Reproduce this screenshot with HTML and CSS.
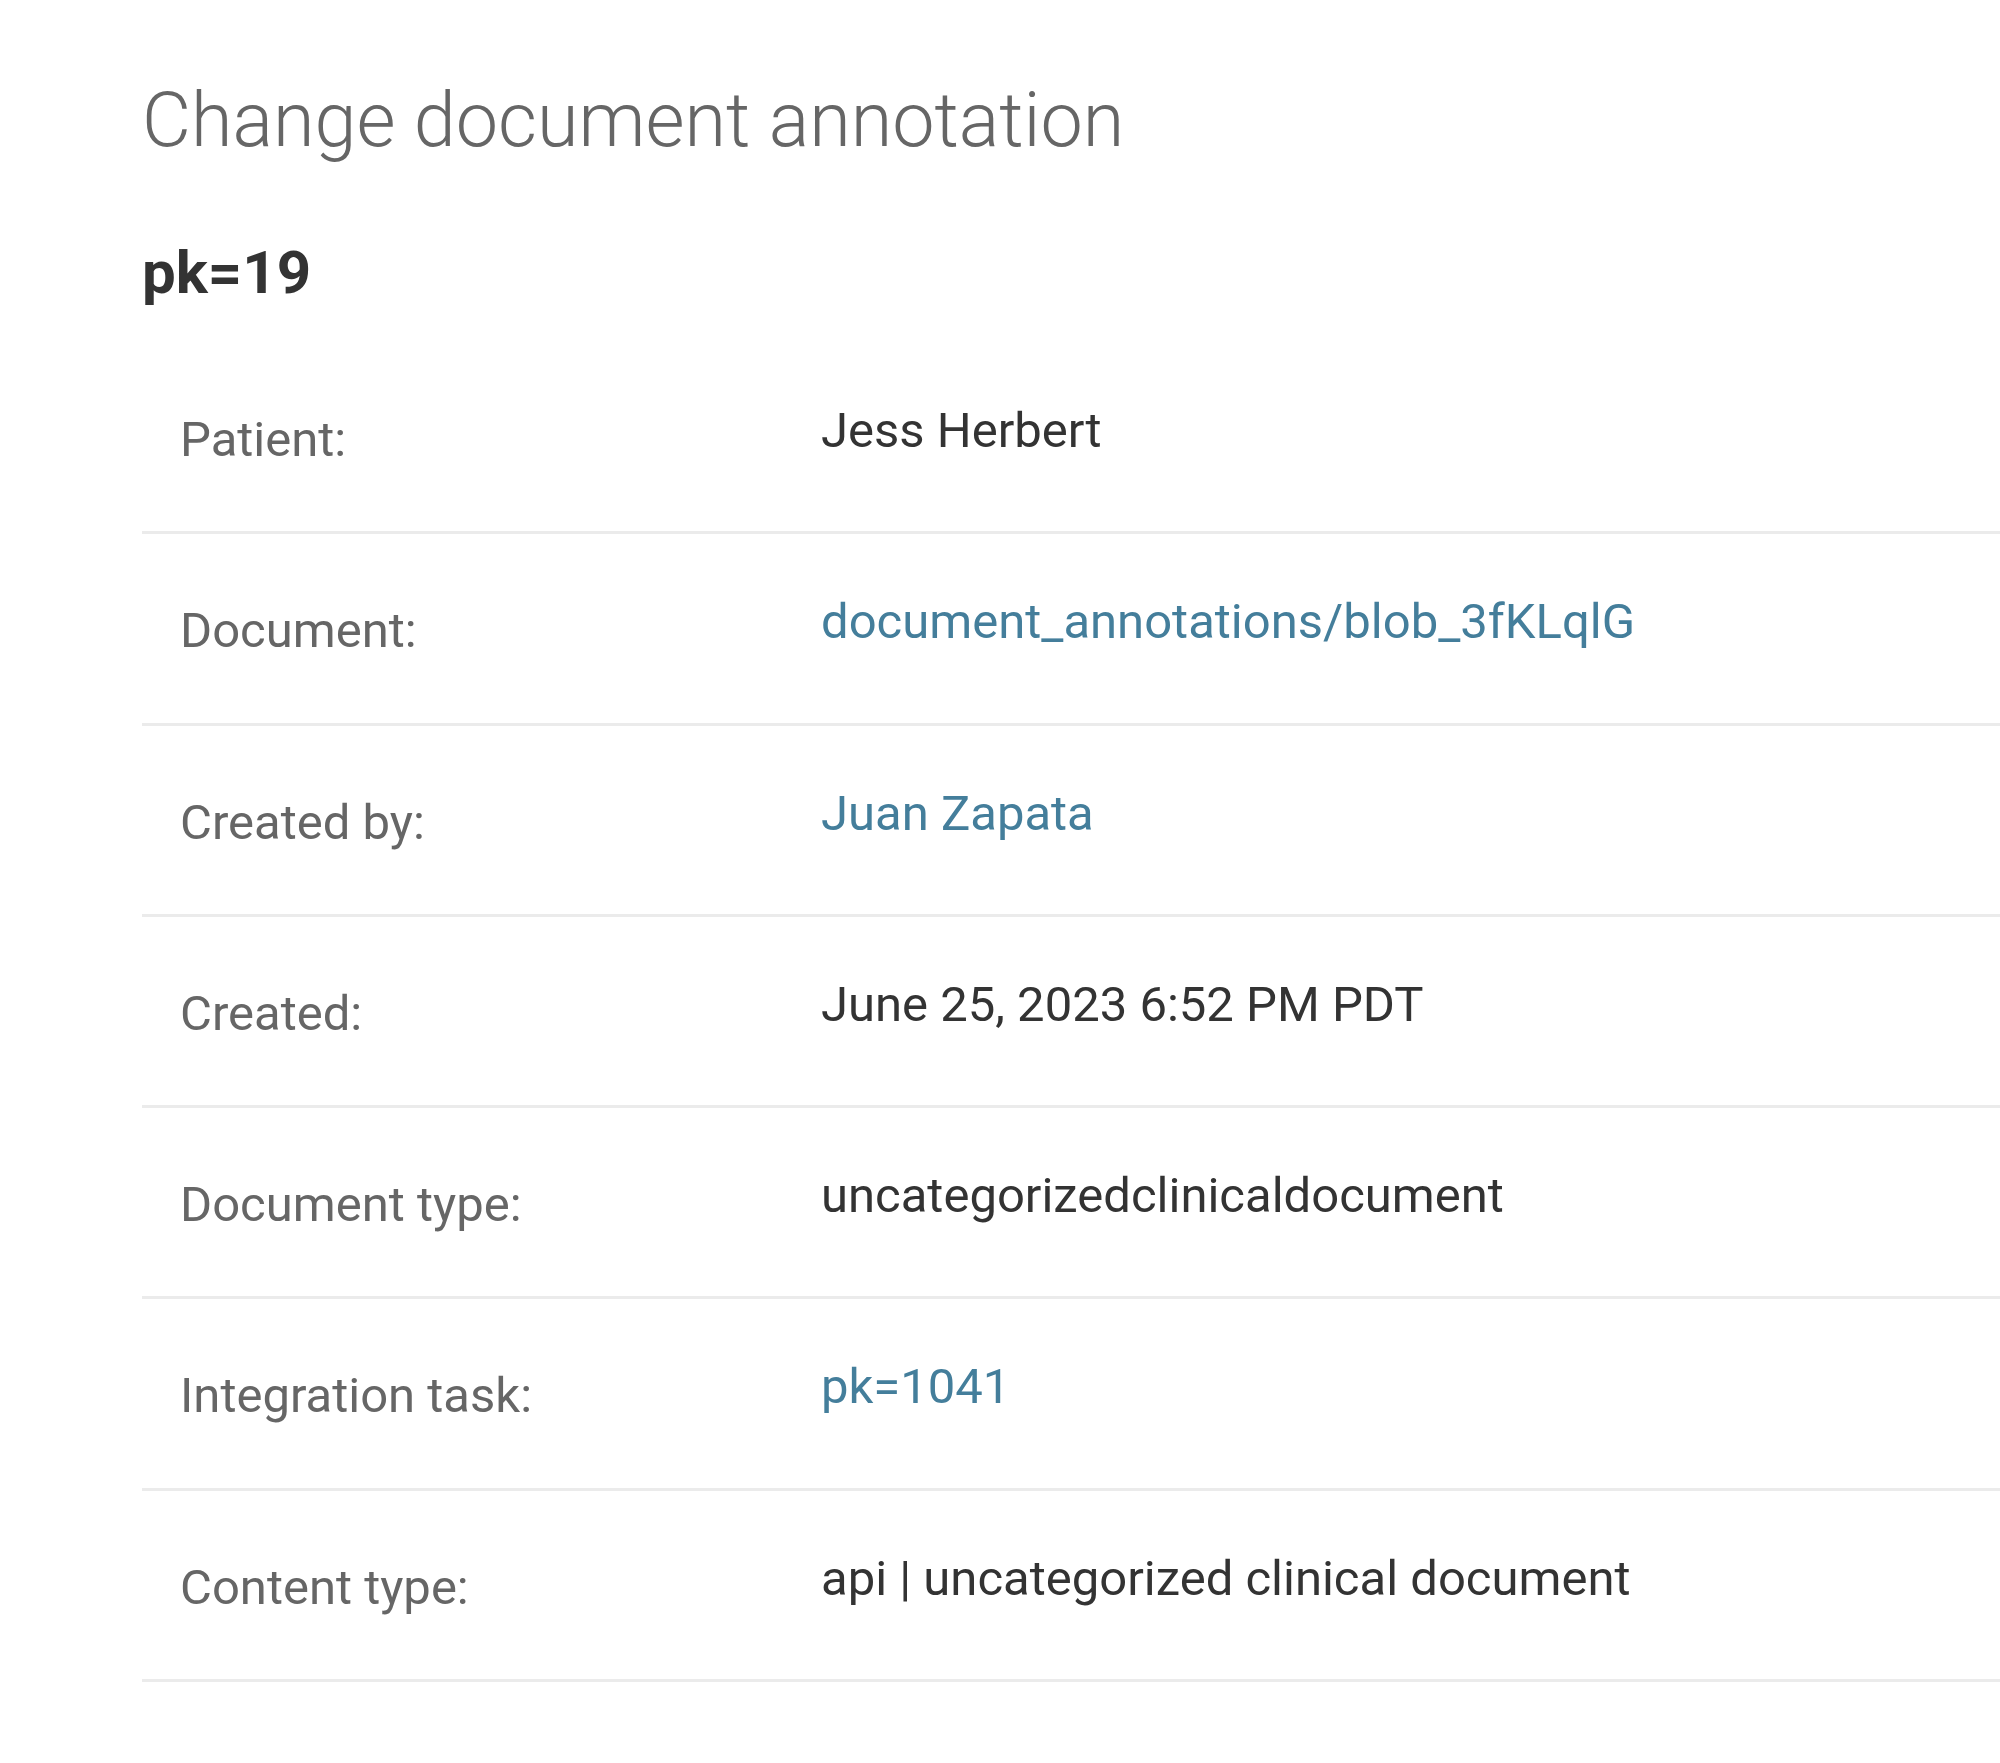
FILE: index.html
```html
<!DOCTYPE html>
<html lang="en">
<head>
<meta charset="utf-8">
<title>Change document annotation</title>
<link rel="stylesheet" href="styles.css">
</head>
<body>
<div class="content">
  <h1 class="title">Change document annotation</h1>
  <h2 class="subtitle">pk=19</h2>
  <fieldset class="module">
    <div class="row">
      <div class="label">Patient:</div>
      <div class="value">Jess Herbert</div>
    </div>
    <div class="row">
      <div class="label">Document:</div>
      <div class="value"><a href="#">document_annotations/blob_3fKLqlG</a></div>
    </div>
    <div class="row">
      <div class="label">Created by:</div>
      <div class="value"><a href="#">Juan Zapata</a></div>
    </div>
    <div class="row">
      <div class="label">Created:</div>
      <div class="value">June 25, 2023 6:52 PM PDT</div>
    </div>
    <div class="row">
      <div class="label">Document type:</div>
      <div class="value">uncategorizedclinicaldocument</div>
    </div>
    <div class="row">
      <div class="label">Integration task:</div>
      <div class="value"><a href="#">pk=1041</a></div>
    </div>
    <div class="row">
      <div class="label">Content type:</div>
      <div class="value">api | uncategorized clinical document</div>
    </div>
  </fieldset>
</div>
</body>
</html>
```
FILE: styles.css
```css
html, body {
  margin: 0;
  padding: 0;
  background: #ffffff;
}
body {
  font-family: Roboto, "Liberation Sans", sans-serif;
  color: #333333;
  overflow: hidden;
}
.content {
  padding: 0 0 0 142px;
}
.title {
  margin: 75px 0 0 0;
  font-size: 75.5px;
  line-height: 90px;
  font-weight: 300;
  color: #666666;
}
.subtitle {
  margin: 72px 0 0 0;
  font-size: 60px;
  line-height: 72px;
  font-weight: 700;
  color: #333333;
}
.module {
  margin: 34px 0 0 0;
  padding: 0;
  border: 0;
  min-width: 0;
}
.row {
  display: flex;
  align-items: flex-start;
  padding: 60px 0 62.3px 38px;
  border-bottom: 3px solid #ebebeb;
}
.label {
  flex: 0 0 641px;
  padding-top: 7px;
  font-size: 49px;
  line-height: 59px;
  color: #666666;
}
.value {
  font-size: 49px;
  line-height: 55px;
  color: #333333;
}
.value a {
  color: #447e9b;
  text-decoration: none;
}
```
